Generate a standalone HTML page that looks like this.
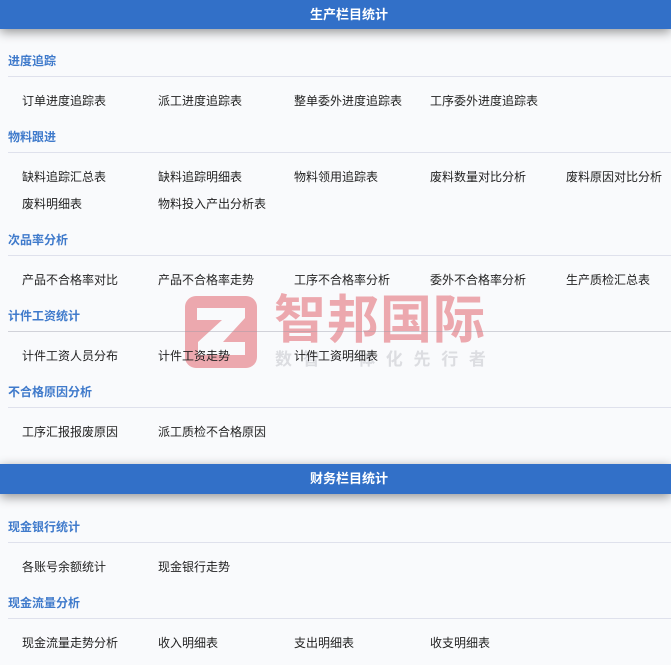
<!DOCTYPE html>
<html lang="zh">
<head>
<meta charset="utf-8">
<style>
html,body{margin:0;padding:0;background:#f9fafc;}
body{width:671px;height:665px;overflow:hidden;position:relative;font-family:"Liberation Sans","Noto Sans CJK SC",sans-serif;}
.b{position:absolute;left:0;width:671px;background:#3270c8;color:#fff;font-size:13px;font-weight:bold;text-align:center;text-indent:27px;box-shadow:0 3px 11px rgba(0,0,0,.42);}
.h{position:absolute;left:8px;font-size:12px;font-weight:bold;color:#3f7acb;line-height:18px;white-space:nowrap;}
.l{position:absolute;left:8px;width:663px;height:1px;background:#dfe1ec;}
.t{position:absolute;font-size:12px;color:#222;line-height:18px;white-space:nowrap;}
.wm{position:absolute;z-index:5;white-space:nowrap;}
</style>
</head>
<body>
<div class="b" style="top:0;height:29px;line-height:29px">生产栏目统计</div>
<div class="h" style="top:52px">进度追踪</div><div class="l" style="top:76px"></div>
<div class="t" style="left:22px;top:92px">订单进度追踪表</div><div class="t" style="left:158px;top:92px">派工进度追踪表</div><div class="t" style="left:294px;top:92px">整单委外进度追踪表</div><div class="t" style="left:430px;top:92px">工序委外进度追踪表</div>
<div class="h" style="top:128px">物料跟进</div><div class="l" style="top:152px"></div>
<div class="t" style="left:22px;top:168px">缺料追踪汇总表</div><div class="t" style="left:158px;top:168px">缺料追踪明细表</div><div class="t" style="left:294px;top:168px">物料领用追踪表</div><div class="t" style="left:430px;top:168px">废料数量对比分析</div><div class="t" style="left:566px;top:168px">废料原因对比分析</div>
<div class="t" style="left:22px;top:195px">废料明细表</div><div class="t" style="left:158px;top:195px">物料投入产出分析表</div>
<div class="h" style="top:231px">次品率分析</div><div class="l" style="top:255px"></div>
<div class="t" style="left:22px;top:271px">产品不合格率对比</div><div class="t" style="left:158px;top:271px">产品不合格率走势</div><div class="t" style="left:294px;top:271px">工序不合格率分析</div><div class="t" style="left:430px;top:271px">委外不合格率分析</div><div class="t" style="left:566px;top:271px">生产质检汇总表</div>
<div class="h" style="top:307px">计件工资统计</div><div class="l" style="top:331px;z-index:6;background:rgba(150,150,165,.4)"></div>
<div class="t" style="left:22px;top:347px;z-index:6">计件工资人员分布</div><div class="t" style="left:158px;top:347px;z-index:6">计件工资走势</div><div class="t" style="left:294px;top:347px;z-index:6">计件工资明细表</div>
<div class="h" style="top:383px">不合格原因分析</div><div class="l" style="top:407px"></div>
<div class="t" style="left:22px;top:423px">工序汇报报废原因</div><div class="t" style="left:158px;top:423px">派工质检不合格原因</div>
<div class="b" style="top:464px;height:30px;line-height:30px">财务栏目统计</div>
<div class="h" style="top:518px">现金银行统计</div><div class="l" style="top:542px"></div>
<div class="t" style="left:22px;top:558px">各账号余额统计</div><div class="t" style="left:158px;top:558px">现金银行走势</div>
<div class="h" style="top:594px">现金流量分析</div><div class="l" style="top:618px"></div>
<div class="t" style="left:22px;top:634px">现金流量走势分析</div><div class="t" style="left:158px;top:634px">收入明细表</div><div class="t" style="left:294px;top:634px">支出明细表</div><div class="t" style="left:430px;top:634px">收支明细表</div>
<svg class="wm" style="left:185px;top:296px" width="72" height="72" viewBox="0 0 72 72">
<rect width="72" height="72" rx="11" fill="#eca8ae"/>
<path d="M12 12H60V22L38 46H60V59H13V46L37 24H12Z" fill="#f9fafc"/>
</svg>
<div class="wm" style="left:274px;top:289px;font-size:52px;line-height:64px;font-weight:bold;color:#eca8ae;letter-spacing:1px">智邦国际</div>
<div class="wm" style="left:275px;top:349px;font-size:17px;line-height:22px;font-weight:bold;color:#dcdde1;letter-spacing:10.7px">数智一体化先行者</div>
</body>
</html>
